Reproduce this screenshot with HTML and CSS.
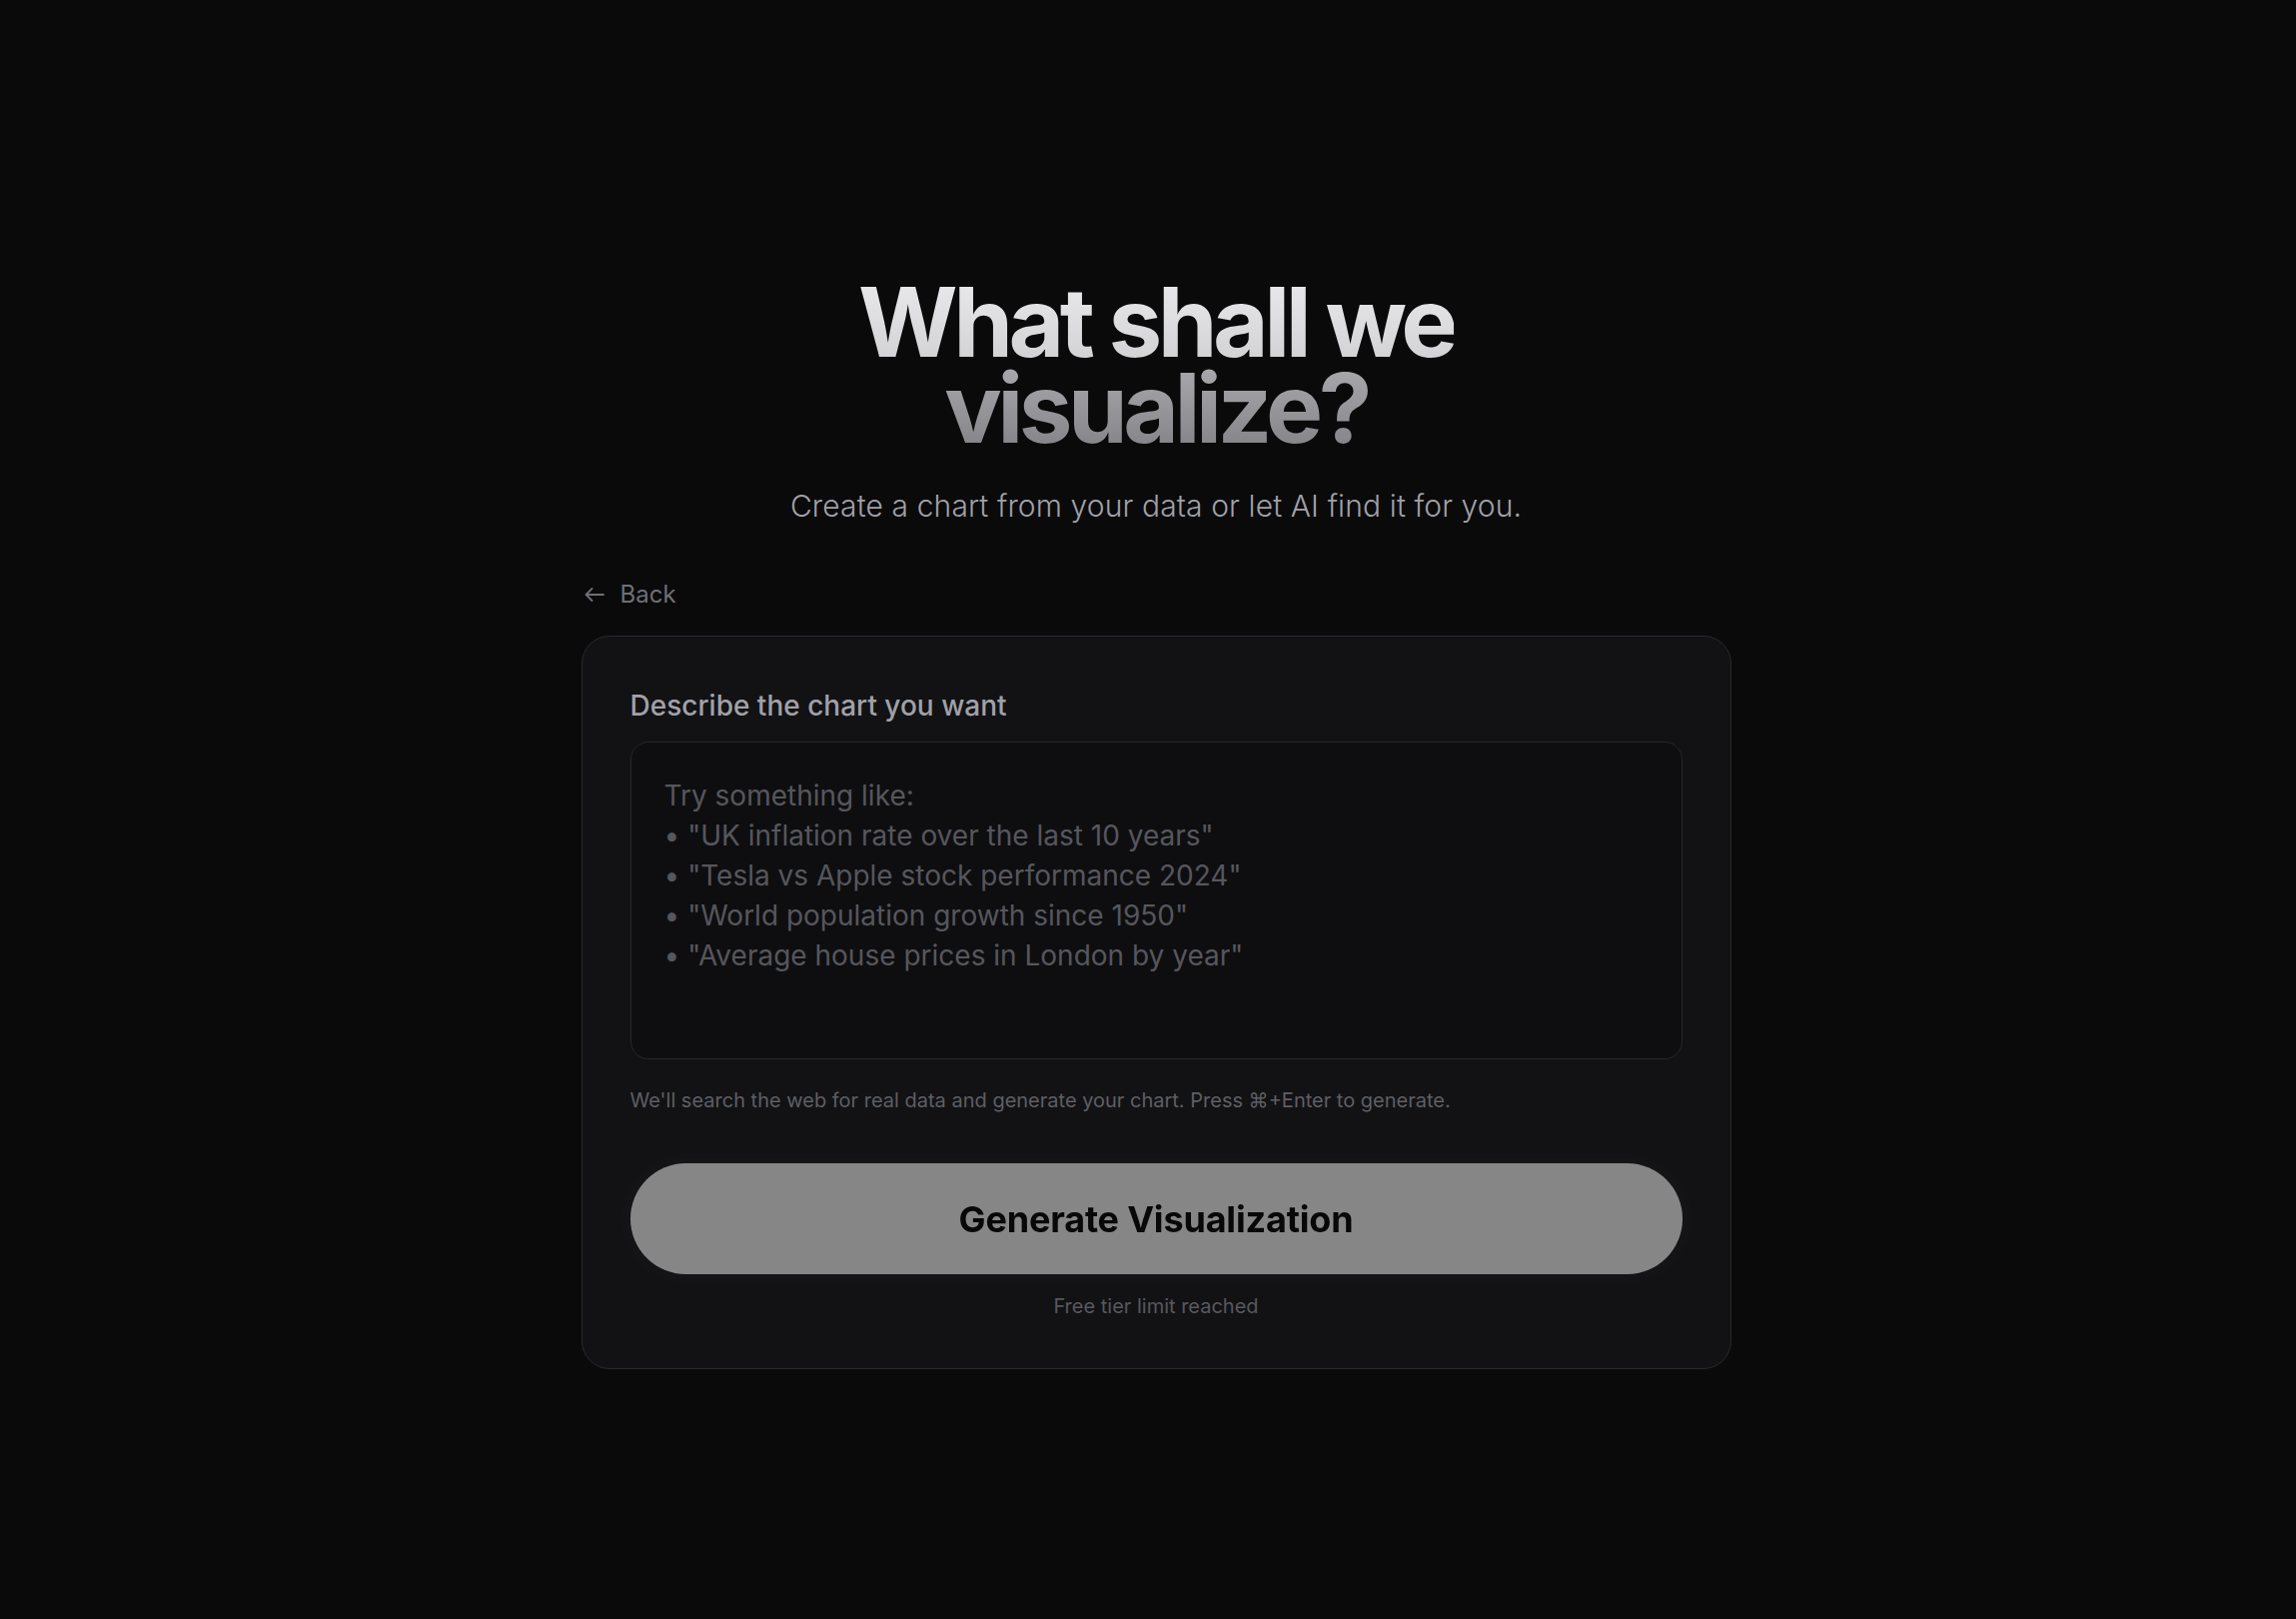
FILE: index.html
```html
<!DOCTYPE html>
<html lang="en">
<head>
<meta charset="utf-8">
<title>What shall we visualize?</title>
<link rel="stylesheet" href="styles.css">
</head>
<body>
<main class="page">
  <h1 class="title"><span class="title-line">What shall we</span><span class="title-line">visualize?</span></h1>
  <p class="subtitle">Create a chart from your data or let AI find it for you.</p>
  <section class="panel">
    <a class="back" href="#">
      <svg class="back-icon" viewBox="0 0 20 14" width="20" height="14" aria-hidden="true">
        <path d="M19 7H1.5M7.5 1 1.5 7l6 6" fill="none" stroke="currentColor" stroke-width="1.8" stroke-linecap="round" stroke-linejoin="round"/>
      </svg>
      <span>Back</span>
    </a>
    <div class="card">
      <label class="label" for="prompt">Describe the chart you want</label>
      <textarea id="prompt" class="prompt" placeholder="Try something like:&#10;• &quot;UK inflation rate over the last 10 years&quot;&#10;• &quot;Tesla vs Apple stock performance 2024&quot;&#10;• &quot;World population growth since 1950&quot;&#10;• &quot;Average house prices in London by year&quot;"></textarea>
      <p class="hint">We'll search the web for real data and generate your chart. Press ⌘+Enter to generate.</p>
      <button class="generate" type="button" disabled>Generate Visualization</button>
      <p class="limit">Free tier limit reached</p>
    </div>
  </section>
</main>
</body>
</html>
```

FILE: styles.css
```css
* { box-sizing: border-box; }

html, body {
  margin: 0;
  background: #0a0a0b;
}

body {
  font-family: Inter, "Noto Sans", "Liberation Sans", sans-serif;
  color: #e4e4e7;
  min-height: 1620px;
}

.page {
  display: flex;
  flex-direction: column;
  align-items: center;
  padding: 279px 0 0 16px;
}

.title {
  margin: 0;
  font-size: 96px;
  line-height: 0.9;
  font-weight: 700;
  letter-spacing: -0.047em;
  text-align: center;
  background: linear-gradient(to bottom, #e9e9eb 0%, #d3d3d6 46%, #a7a7ab 53%, #838387 100%);
  -webkit-background-clip: text;
  background-clip: text;
  color: transparent;
}

.title-line { display: block; }

.subtitle {
  margin: 32px 0 0;
  font-size: 30px;
  line-height: 45px;
  font-weight: 300;
  letter-spacing: 0.004em;
  color: #a1a1a8;
}

.panel {
  width: 1151px;
  margin-top: 48px;
}

.back {
  display: inline-flex;
  align-items: center;
  gap: 16px;
  padding-left: 3px;
  font-size: 24px;
  line-height: 36px;
  color: #6f6f76;
  text-decoration: none;
}

.back-icon { display: block; }

.card {
  margin-top: 23px;
  background: #121214;
  border: 1.5px solid #2a2a2e;
  border-radius: 28px;
  padding: 48px;
  display: flex;
  flex-direction: column;
}

.label {
  font-size: 28px;
  line-height: 40.5px;
  font-weight: 500;
  color: #a1a1a9;
  padding-top: 1px;
}

.prompt {
  margin-top: 16px;
  width: 100%;
  height: 318px;
  resize: none;
  background: #0e0e10;
  border: 1.5px solid #28282c;
  border-radius: 18px;
  padding: 32.5px 33px;
  font-family: Inter, "Noto Sans", sans-serif;
  font-size: 28px;
  line-height: 40px;
  color: #d4d4d8;
  outline: none;
}

.prompt::placeholder {
  color: #56565d;
  opacity: 1;
}

.hint {
  margin: 28px 0 0;
  font-size: 20px;
  line-height: 27px;
  color: #5e5e65;
}

.generate {
  margin-top: 49px;
  width: 100%;
  height: 111px;
  border: none;
  border-radius: 999px;
  background: #fafafa;
  color: #000;
  opacity: 0.5;
  font-family: Inter, "Noto Sans", sans-serif;
  font-size: 36px;
  font-weight: 700;
  letter-spacing: -0.005em;
  box-shadow: 0 0 24px rgba(255, 255, 255, 0.06);
}

.limit {
  margin: 19px 0 0;
  text-align: center;
  font-size: 20px;
  line-height: 27px;
  color: #58585f;
}
```
